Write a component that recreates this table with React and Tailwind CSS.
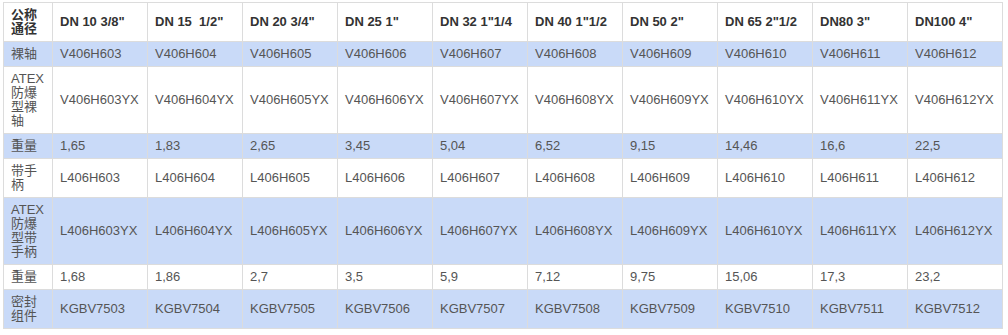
import React from "react";

const headers = [
  'DN 10 3/8"',
  'DN 15\u00a0 1/2"',
  'DN 20 3/4"',
  'DN 25 1"',
  'DN 32 1"1/4',
  'DN 40 1"1/2',
  'DN 50 2"',
  'DN 65 2"1/2',
  'DN80 3"',
  'DN100 4"',
];

const nums = ["03", "04", "05", "06", "07", "08", "09", "10", "11", "12"];

const rows = [
  { label: "裸轴", blue: true, cells: nums.map((n) => `V406H6${n}`) },
  { label: "ATEX防爆型裸轴", blue: false, cells: nums.map((n) => `V406H6${n}YX`) },
  { label: "重量", blue: true, cells: ["1,65", "1,83", "2,65", "3,45", "5,04", "6,52", "9,15", "14,46", "16,6", "22,5"] },
  { label: "带手柄", blue: false, cells: nums.map((n) => `L406H6${n}`) },
  { label: "ATEX防爆型带手柄", blue: true, cells: nums.map((n) => `L406H6${n}YX`) },
  { label: "重量", blue: false, cells: ["1,68", "1,86", "2,7", "3,5", "5,9", "7,12", "9,75", "15,06", "17,3", "23,2"] },
  { label: "密封组件", blue: true, cells: nums.map((n, i) => `KGBV75${n}`) },
];

export default function App() {
  return (
    <div
      className="w-[1008px] h-[335px] bg-white pt-[2px] pl-[3px]"
      style={{ fontFamily: '"Liberation Sans", Arial, "Noto Sans CJK SC", sans-serif' }}
    >
      <table className="table-fixed border-collapse w-[1000px] text-[13px] leading-[14px] text-[#555]">
        <colgroup>
          <col className="w-[49px]" />
          {headers.map((h) => (
            <col key={h} className="w-[95px]" />
          ))}
        </colgroup>
        <thead>
          <tr className="bg-white">
            <th className="border border-[#dcdcdc] px-[7px] py-[5px] text-left align-middle font-bold text-[#333] break-all">
              公称通径
            </th>
            {headers.map((h) => (
              <th
                key={h}
                className="border border-[#dcdcdc] px-[7px] py-[5px] text-left align-middle font-bold text-[#333] whitespace-nowrap"
              >
                {h}
              </th>
            ))}
          </tr>
        </thead>
        <tbody>
          {rows.map((r, ri) => (
            <tr key={ri} className={r.blue ? "bg-[#c9daf8]" : "bg-white"}>
              <td className="border border-[#dcdcdc] px-[7px] py-[5px] align-middle break-all">
                {r.label}
              </td>
              {r.cells.map((c, ci) => (
                <td
                  key={ci}
                  className="border border-[#dcdcdc] px-[7px] py-[5px] align-middle whitespace-nowrap"
                >
                  {c}
                </td>
              ))}
            </tr>
          ))}
        </tbody>
      </table>
    </div>
  );
}
